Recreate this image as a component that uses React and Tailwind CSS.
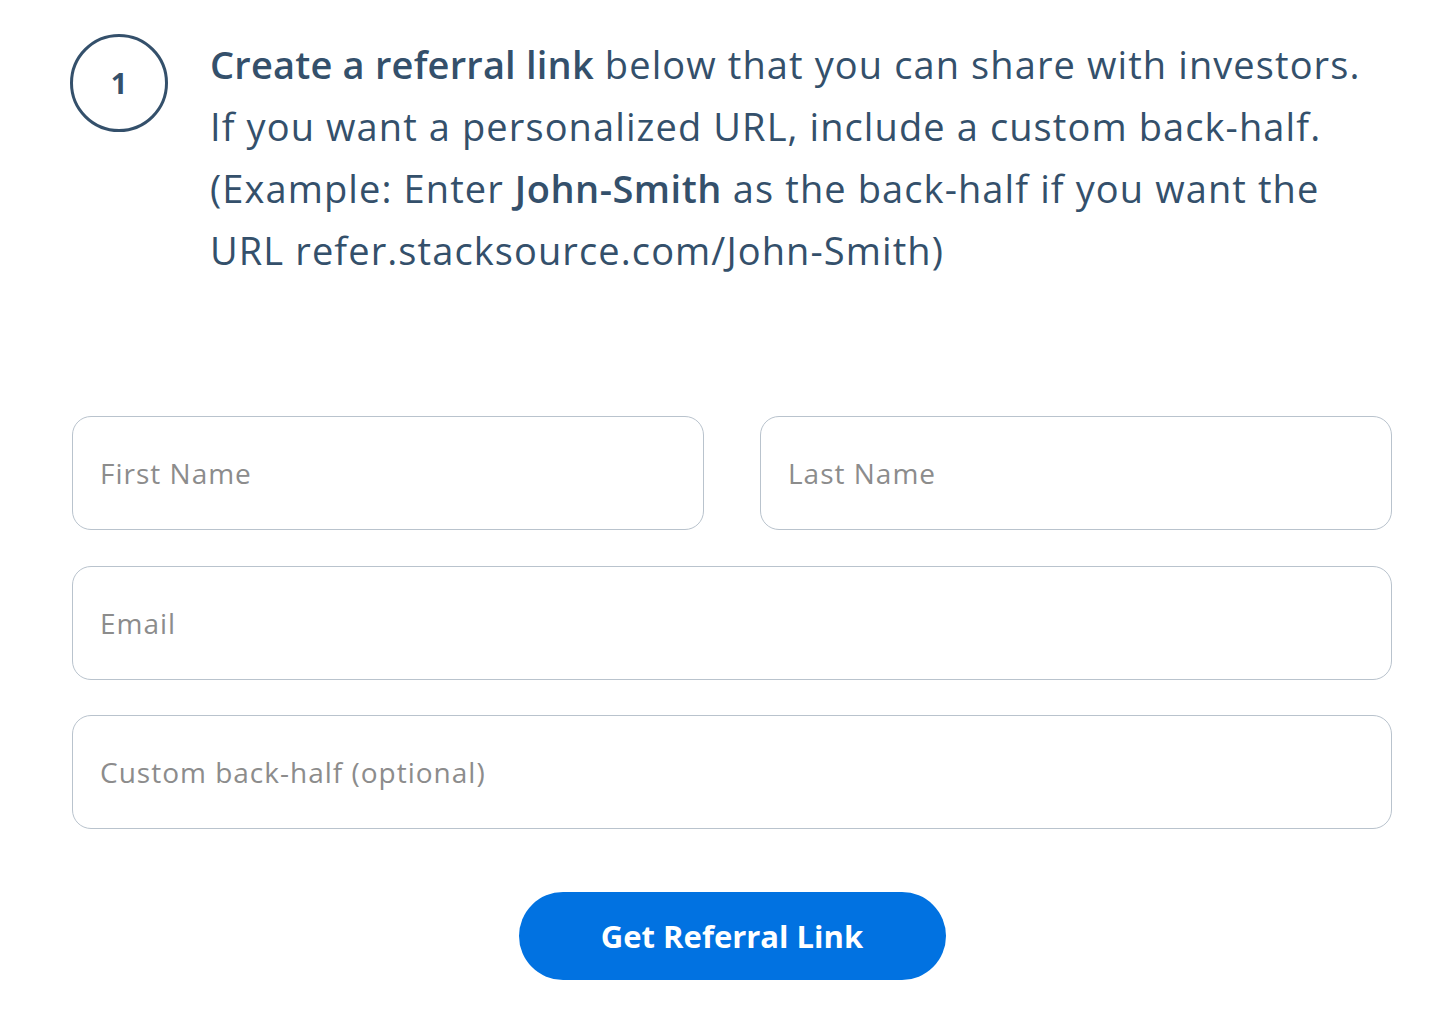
import React, { useState } from "react";

const Field = ({ placeholder, value, onChange }) => (
  <input
    type="text"
    placeholder={placeholder}
    value={value}
    onChange={onChange}
    className="w-full h-[114px] rounded-[19px] border border-[#b9c3cd] bg-white pl-[27px] pr-6 text-[28px] tracking-[1px] text-[#34506b] placeholder:text-[#8c8c8c] outline-none"
  />
);

const App = () => {
  const [form, setForm] = useState({ first: "", last: "", email: "", half: "" });

  // Update one field of the form
  const update = (key) => (e) => setForm({ ...form, [key]: e.target.value });

  return (
    <div
      className="min-h-screen bg-white text-[#34506b]"
      style={{ fontFamily: "'Open Sans', 'Noto Sans', sans-serif" }}
    >
      <div className="w-[1320px] ml-[72px] pt-[33px]">
        {/* Step intro */}
        <div className="flex items-start">
          <div className="ml-[-2px] mt-[1px] w-[98px] h-[98px] shrink-0 rounded-full border-[3px] border-[#34506b] flex items-center justify-center text-[29px] font-bold">
            1
          </div>
          <p className="ml-[42px] text-[38px] leading-[62px] tracking-[1.1px] whitespace-nowrap">
            <span className="font-semibold tracking-[0.2px]">Create a referral link</span> below that you can share with investors.
            <br />
            If you want a personalized URL, include a custom back-half.
            <br />
            (Example: Enter <span className="font-semibold tracking-[0.5px]">John-Smith</span> as the back-half if you want the
            <br />
            URL refer.stacksource.com/John-Smith)
          </p>
        </div>

        {/* Form */}
        <form className="mt-[135px]" onSubmit={(e) => e.preventDefault()}>
          <div className="grid grid-cols-2 gap-[56px]">
            <Field placeholder="First Name" value={form.first} onChange={update("first")} />
            <Field placeholder="Last Name" value={form.last} onChange={update("last")} />
          </div>
          <div className="mt-[36px]">
            <Field placeholder="Email" value={form.email} onChange={update("email")} />
          </div>
          <div className="mt-[35px]">
            <Field placeholder="Custom back-half (optional)" value={form.half} onChange={update("half")} />
          </div>
          <div className="mt-[63px] flex justify-center">
            <button
              type="submit"
              className="w-[427px] h-[88px] rounded-full bg-[#0172e1] text-white text-[31px] font-bold"
            >
              Get Referral Link
            </button>
          </div>
        </form>
      </div>
    </div>
  );
};

export default App;
